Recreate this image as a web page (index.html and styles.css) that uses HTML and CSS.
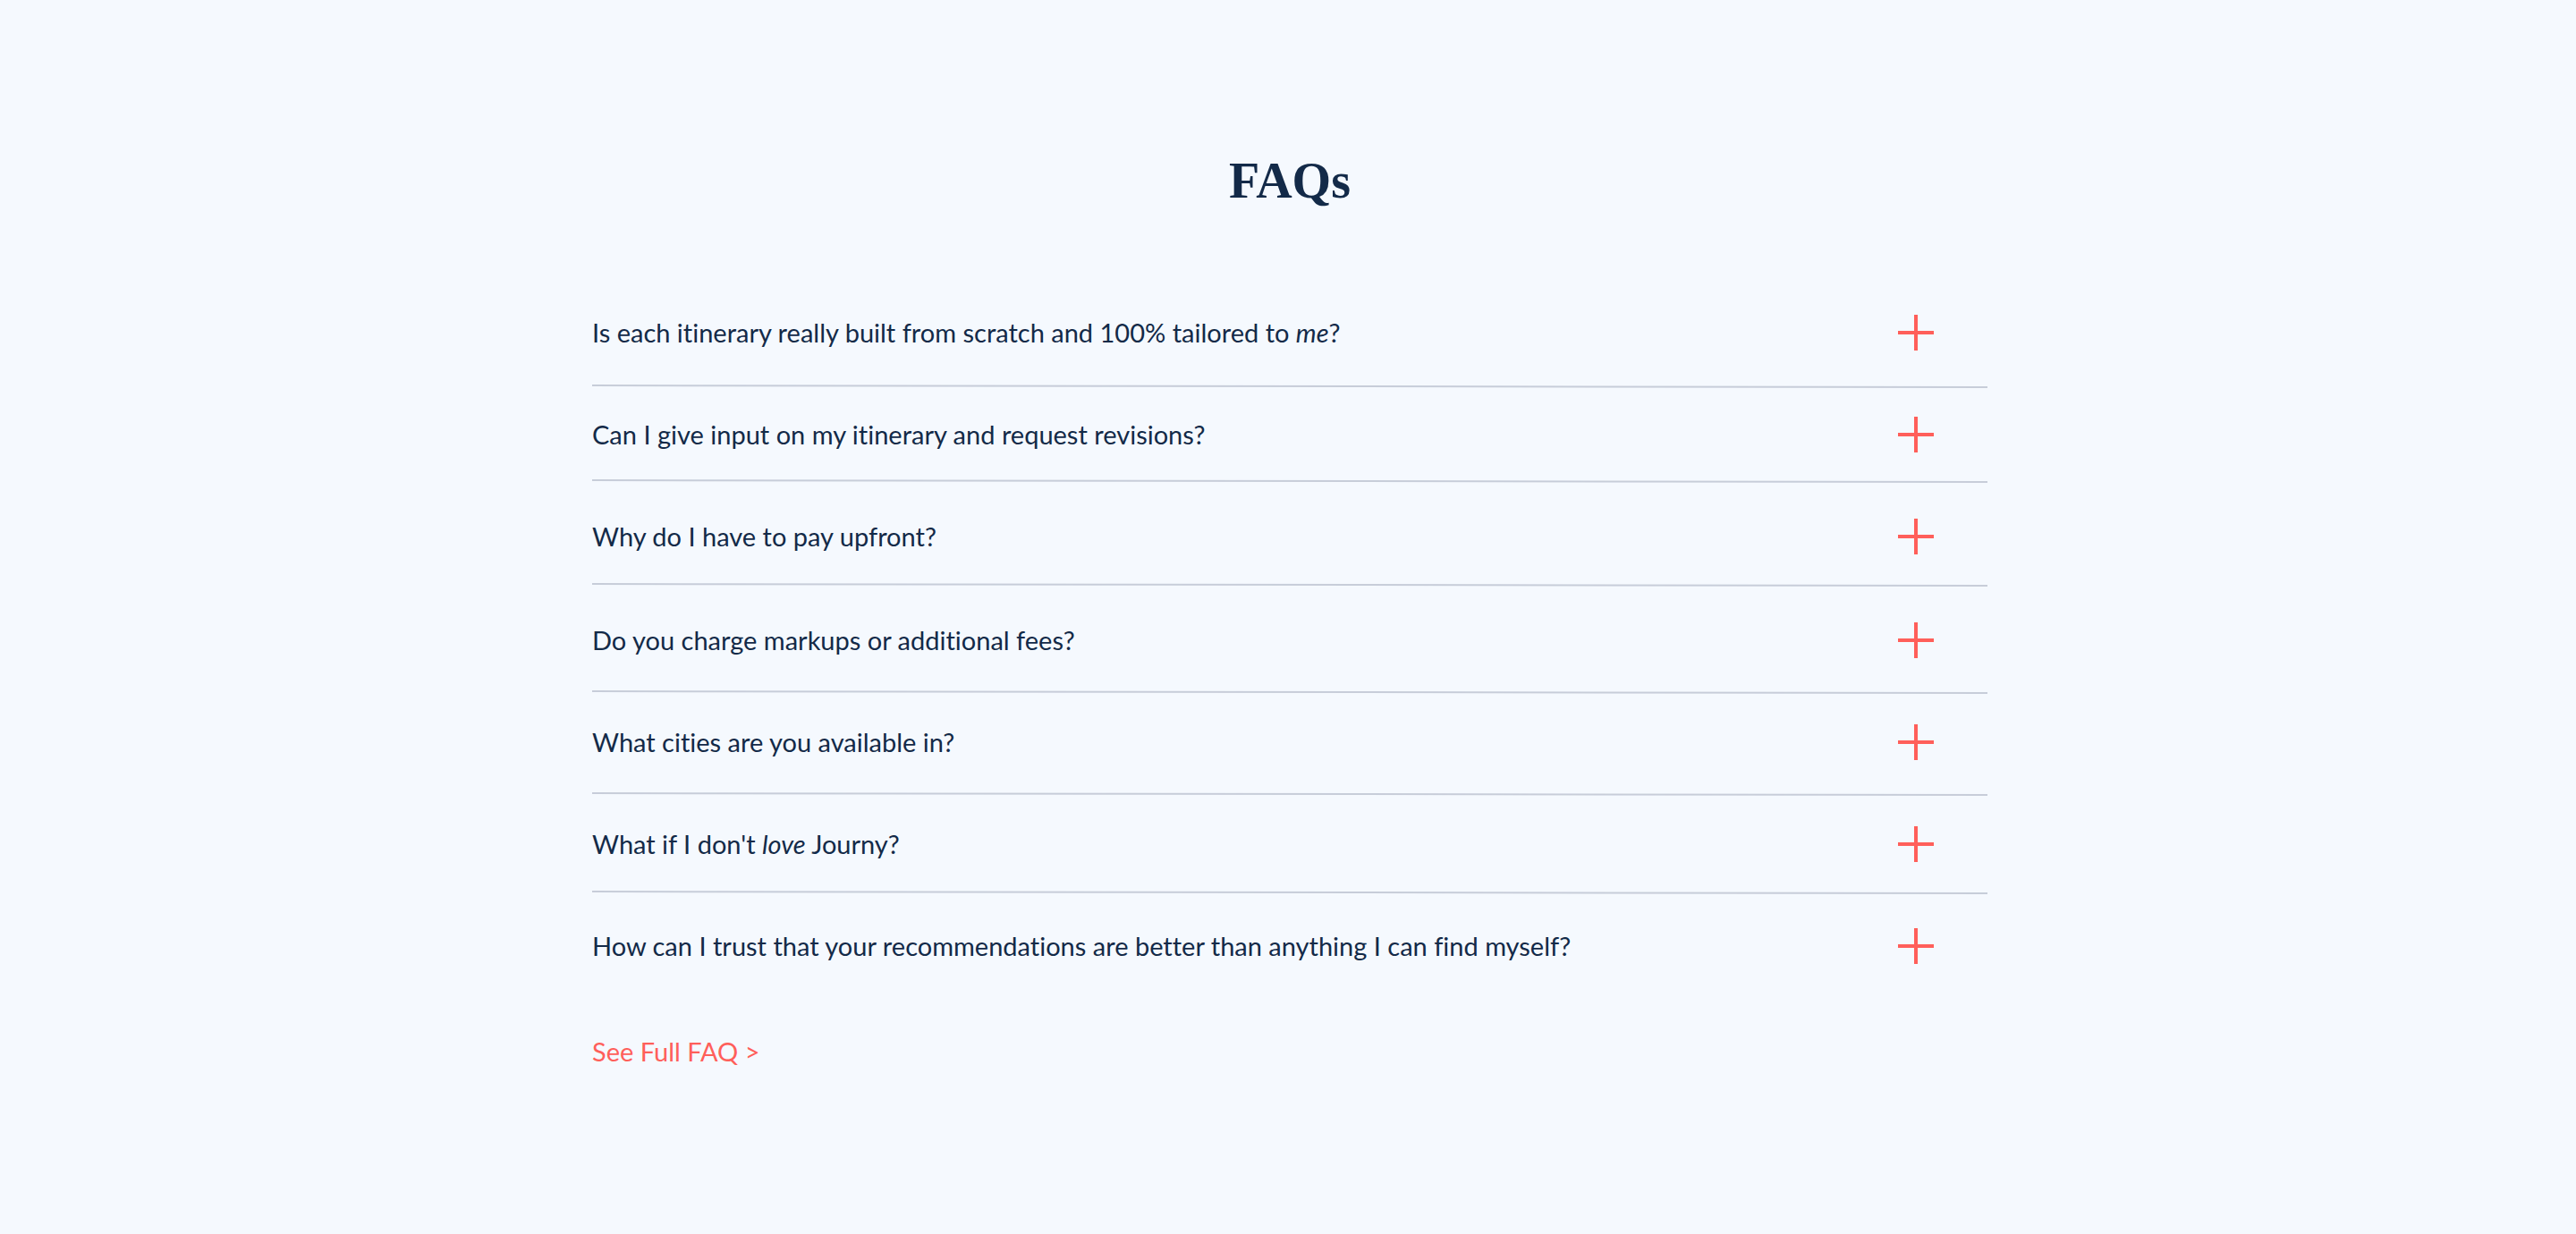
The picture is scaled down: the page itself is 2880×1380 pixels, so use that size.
FILE: index.html
```html
<!DOCTYPE html>
<html lang="en">
<head>
<meta charset="utf-8">
<meta name="viewport" content="width=device-width, initial-scale=1">
<title>FAQs</title>
<link rel="stylesheet" href="styles.css">
</head>
<body>
<svg width="0" height="0" class="sprite" aria-hidden="true">
  <symbol id="plus" viewBox="0 0 40 40"><path d="M18 0h4v18h18v4H22v18h-4V22H0v-4h18z"/></symbol>
  <symbol id="rule" viewBox="0 0 1560 4" preserveAspectRatio="none"><path d="M0 0L1560 2V4L0 2z"/></symbol>
</svg>
<main class="faq">
  <h1 class="faq-title">FAQs</h1>
  <ul class="faq-list">
    <li class="faq-item">
      <button type="button" class="faq-question" aria-expanded="false"><span>Is each itinerary really built from scratch and 100% tailored to <em>me</em>?</span><svg class="plus" aria-hidden="true"><use href="#plus"/></svg></button>
      <svg class="rule" aria-hidden="true"><use href="#rule"/></svg>
    </li>
    <li class="faq-item">
      <button type="button" class="faq-question" aria-expanded="false"><span>Can I give input on my itinerary and request revisions?</span><svg class="plus" aria-hidden="true"><use href="#plus"/></svg></button>
      <svg class="rule" aria-hidden="true"><use href="#rule"/></svg>
    </li>
    <li class="faq-item">
      <button type="button" class="faq-question" aria-expanded="false"><span>Why do I have to pay upfront?</span><svg class="plus" aria-hidden="true"><use href="#plus"/></svg></button>
      <svg class="rule" aria-hidden="true"><use href="#rule"/></svg>
    </li>
    <li class="faq-item">
      <button type="button" class="faq-question" aria-expanded="false"><span>Do you charge markups or additional fees?</span><svg class="plus" aria-hidden="true"><use href="#plus"/></svg></button>
      <svg class="rule" aria-hidden="true"><use href="#rule"/></svg>
    </li>
    <li class="faq-item">
      <button type="button" class="faq-question" aria-expanded="false"><span>What cities are you available in?</span><svg class="plus" aria-hidden="true"><use href="#plus"/></svg></button>
      <svg class="rule" aria-hidden="true"><use href="#rule"/></svg>
    </li>
    <li class="faq-item">
      <button type="button" class="faq-question" aria-expanded="false"><span>What if I don't <em>love</em> Journy?</span><svg class="plus" aria-hidden="true"><use href="#plus"/></svg></button>
      <svg class="rule" aria-hidden="true"><use href="#rule"/></svg>
    </li>
    <li class="faq-item">
      <button type="button" class="faq-question" aria-expanded="false"><span>How can I trust that your recommendations are better than anything I can find myself?</span><svg class="plus" aria-hidden="true"><use href="#plus"/></svg></button>
    </li>
  </ul>
  <a class="faq-link" href="#faq">See Full FAQ &gt;</a>
</main>
</body>
</html>
```
FILE: styles.css
```css
* {
  box-sizing: border-box;
}

body {
  margin: 0;
  background: #f5f9fe;
  color: #132a48;
  font-family: Lato, "Open Sans", sans-serif;
  font-size: 29px;
  font-variant-ligatures: none;
  line-height: 40px;
}

.sprite {
  display: block;
}

.faq {
  max-width: 1612px;
  margin: 0 auto;
  padding: 166px 24px 160px 28px;
}

.faq-title {
  margin: 0 0 114px;
  font-family: "Liberation Serif", serif;
  font-size: 56px;
  font-weight: 700;
  line-height: 72px;
  text-align: center;
}

.faq-list {
  display: flex;
  flex-direction: column;
  margin: 0 0 78px;
  padding: 0;
  list-style: none;
}

.faq-question {
  display: flex;
  justify-content: space-between;
  align-items: center;
  gap: 24px;
  width: 100%;
  padding: 0 60px 0 0;
  border: 0;
  background: none;
  color: inherit;
  font: inherit;
  font-variant-ligatures: none;
  text-align: left;
  cursor: pointer;
}

.plus {
  flex: none;
  width: 40px;
  height: 40px;
  fill: #ff5f5a;
}

.rule {
  display: block;
  width: 100%;
  height: 4px;
  margin: 36px 0;
  fill: #c7cdd9;
}

.faq-item:nth-child(1) .rule {
  margin: 38px 0 32px;
}

.faq-item:nth-child(2) .rule {
  margin: 30px 0 40px;
}

.faq-item:nth-child(3) .rule {
  margin: 32px 0 40px;
}

.faq-item:nth-child(4) .rule,
.faq-item:nth-child(5) .rule {
  margin: 36px 0 34px;
}

.faq-item:nth-child(6) .rule {
  margin: 32px 0 38px;
}

.faq-link {
  color: #ff5f5a;
  text-decoration: none;
}
```
